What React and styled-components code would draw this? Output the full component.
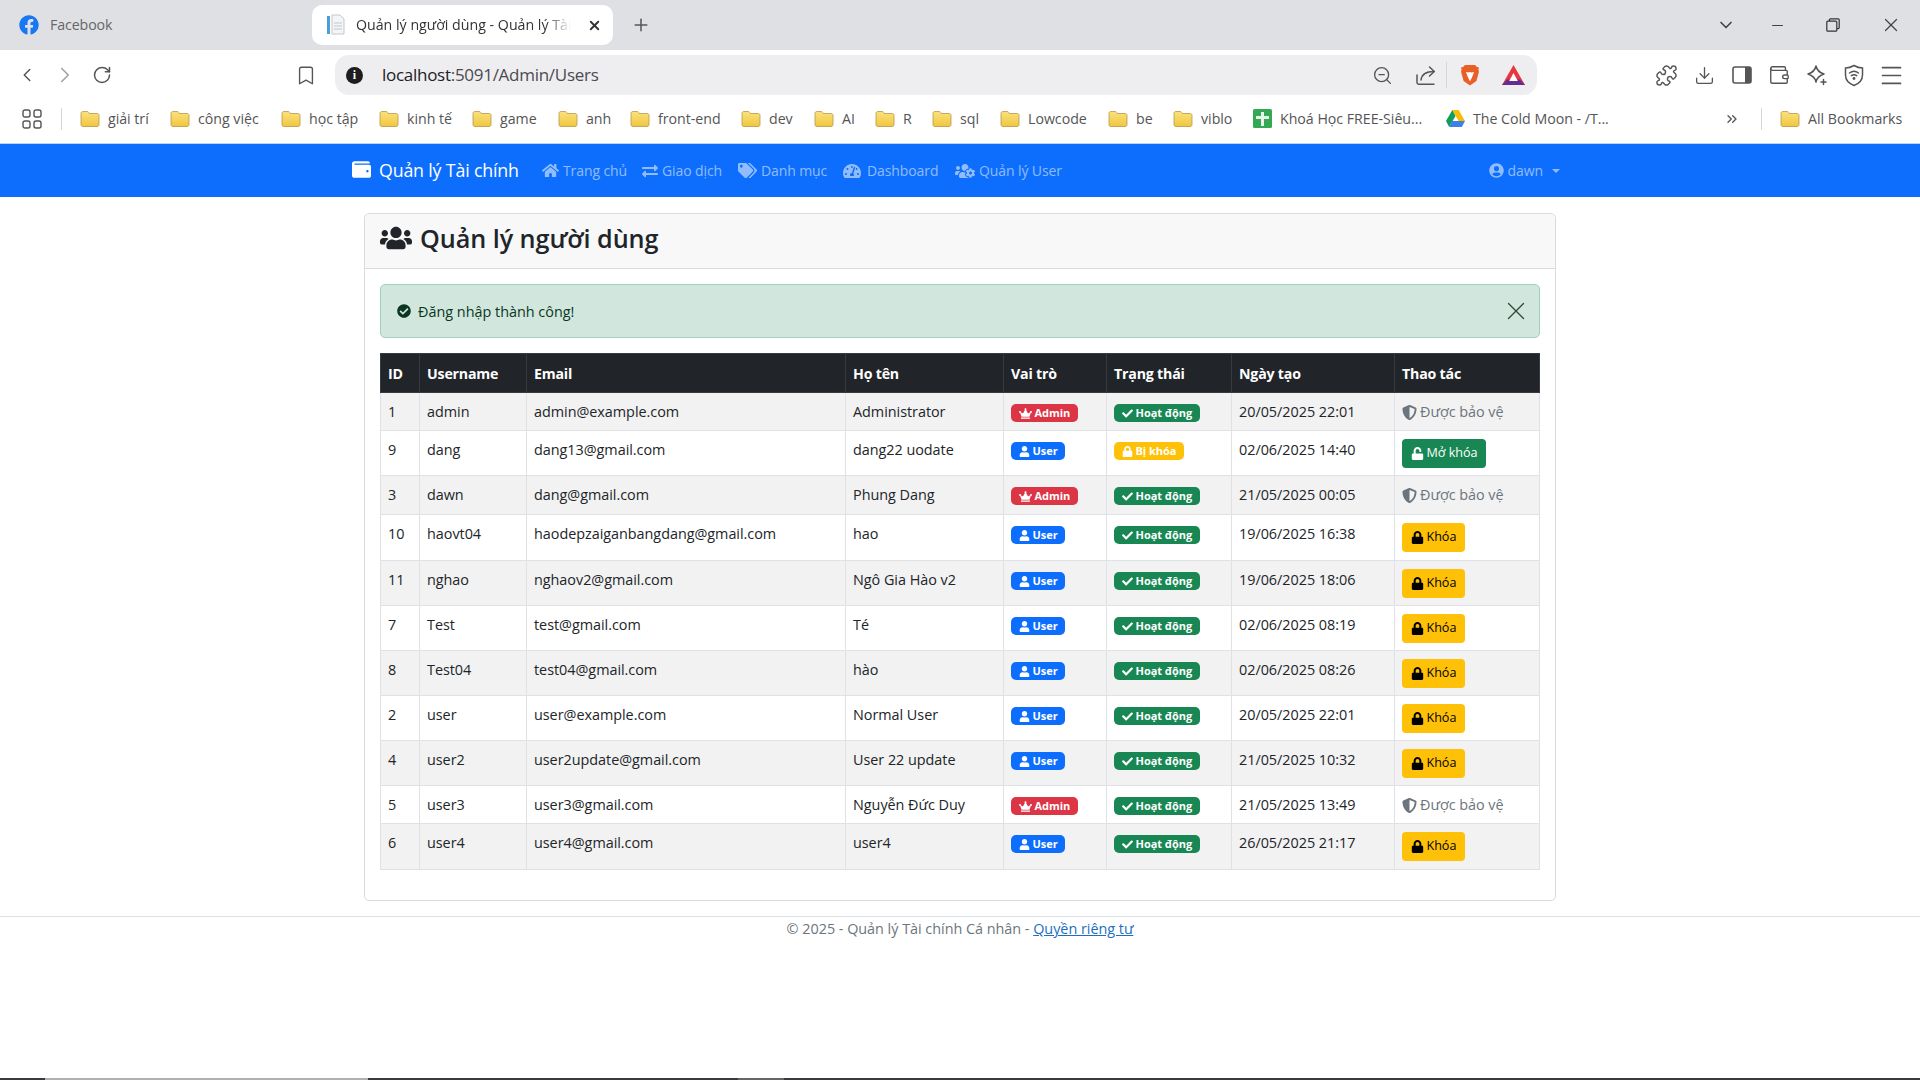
import React from 'react';
import styled, { createGlobalStyle } from 'styled-components';
import {
  FaWallet, FaHome, FaExchangeAlt, FaTags, FaTachometerAlt, FaUsersCog, FaUserCircle, FaUsers,
  FaCheckCircle, FaCrown, FaUser, FaCheck, FaLock, FaUnlock, FaShieldAlt, FaFacebook,
} from 'react-icons/fa';
import {
  ChevronLeft, ChevronRight, RotateCw, Bookmark, ZoomOut, Puzzle, Download, Wallet,
  Menu, ChevronDown, Minus, X, Plus, ChevronsRight,
} from 'lucide-react';

const Global = createGlobalStyle`
  html, body { margin: 0; padding: 0; background: #fff; }
  body { font-family: "Open Sans", "Noto Sans", sans-serif; color: #212529; overflow: hidden; }
  * { box-sizing: border-box; }
`;

const Page = styled.div`
  width: 1920px; height: 1080px; display: flex; flex-direction: column; position: relative; overflow: hidden;
`;
const TabBar = styled.div`
  height: 50px; background: #dfe0e4; display: flex; align-items: center; flex: none;
`;
const InactiveTab = styled.div`
  width: 312px; padding-left: 19px; display: flex; align-items: center; gap: 11px; color: #666;
  font-size: 14.2px; letter-spacing: -0.1px; line-height: 18px;
  svg { color: #1877f2; }
`;
const ActiveTab = styled.div`
  width: 301px; height: 40px; background: #fff; border-radius: 10px; display: flex; align-items: center;
  padding: 0 0 0 15px; font-size: 14.2px; color: #333;
`;
const TabTitle = styled.span`
  width: 215px; margin: 0 16px 2px 11px; overflow: hidden; white-space: nowrap; flex: none;
  -webkit-mask-image: linear-gradient(90deg, #000 88%, transparent);
  mask-image: linear-gradient(90deg, #000 88%, transparent);
`;
const NewTab = styled.div`
  margin-left: 18px; display: flex; color: #555;
`;
const WindowButtons = styled.div`
  margin-left: auto; display: flex; align-items: center; color: #444;
`;
const WindowButton = styled.div`
  width: ${p => p.$w}px; display: flex; justify-content: center;
`;
const Toolbar = styled.div`
  height: 50px; background: #fff; display: flex; align-items: center; flex: none; color: #555; padding-left: 16px;
`;
const NavIcon = styled.div`
  width: ${p => p.$w || 37.5}px; margin-left: ${p => p.$ml || 0}px; display: flex; justify-content: center; flex: none;
  color: ${p => p.$c || '#555'};
`;
const Omnibox = styled.div`
  width: 1202px; height: 40px; margin-left: 18px; background: #eeeef1; border-radius: 14px; flex: none;
  display: flex; align-items: center; padding: 0 12px 0 11px;
`;
const InfoDot = styled.div`
  width: 17px; height: 17px; border-radius: 50%; background: #1d1d20; color: #fff; font: 700 12px/17px "Liberation Serif", serif;
  text-align: center; flex: none;
`;
const Url = styled.div`
  margin: 0 0 2px 19px; font-size: 17px; color: #4a4a4e; letter-spacing: -0.28px; flex: 1;
  b { color: #202124; font-weight: 400; }
`;
const Separator = styled.div`
  width: 1px; height: ${p => p.$h || 26}px; background: #d5d5d8; margin-left: ${p => p.$ml || 0}px; flex: none;
`;
const Actions = styled.div`
  margin-left: 111px; display: flex; align-items: center;
`;
const BookmarksBar = styled.div`
  height: 43px; background: #fff; display: flex; align-items: center; flex: none; padding: 0 0 6px 22px;
  font-size: 14.2px; color: #555;
`;
const Bookmarks = styled.div`
  display: flex; align-items: center; gap: 21px; margin-left: 18px;
`;
const BookmarkItem = styled.div`
  display: flex; align-items: center; gap: 8px; white-space: nowrap; margin-left: ${p => p.$ml || 0}px;
`;
const BookmarkLabel = styled.span`
  display: block; width: ${p => p.$w}px; letter-spacing: -0.02px;
`;
const NavBar = styled.nav`
  height: 54px; background: #0d6efd; border-top: 1px solid #b8d4f0; flex: none;
`;
const NavInner = styled.div`
  width: 1216px; margin: 0 auto; height: 100%; display: flex; align-items: center;
`;
const Brand = styled.div`
  display: flex; align-items: center; gap: 8px; color: #fff; font-size: 17.8px; width: 190px; letter-spacing: -0.17px; line-height: 24px; padding-bottom: 2px;
`;
const NavLink = styled.div`
  display: flex; align-items: center; gap: ${p => p.$gap || 4}px; width: ${p => p.$w}px; color: rgba(255,255,255,.55);
  font-size: 14px; white-space: nowrap; letter-spacing: -0.1px;
`;
const UserMenu = styled(NavLink)`
  margin-left: auto; margin-right: 8px; width: auto;
`;
const Caret = styled.span`
  width: 0; height: 0; border: 4px solid transparent; border-top-color: rgba(255,255,255,.55); border-bottom: 0; margin-left: 5px;
`;
const Main = styled.main`
  width: 1192px; margin: 16px auto 15px; flex: none; border: 1px solid #d9dcdf; border-radius: 5px; height: 688px;
  display: flex; flex-direction: column;
`;
const CardHeader = styled.div`
  height: 55px; background: #f8f8f8; border-bottom: 1px solid #d9dcdf; border-radius: 5px 5px 0 0;
  display: flex; align-items: center; padding: 0 15px 7px; flex: none;
`;
const Title = styled.h1`
  margin: 0; font-size: 25.2px; font-weight: 600; display: flex; align-items: center; gap: 8px; letter-spacing: -0.05px;
`;
const CardBody = styled.div`
  padding: 15px 15px 0;
`;
const Alert = styled.div`
  height: 54px; background: #d1e7dd; border: 1px solid #a3cfbb; border-radius: 5px; color: #0a3622;
  display: flex; align-items: center; padding: 0 8px 0 16px; font-size: 14.4px; gap: 7px;
`;
const Close = styled.div`
  margin-left: auto; display: flex; color: #2d4a3d;
`;
const Table = styled.table`
  width: 1159px; margin-top: 15px; border-collapse: collapse; table-layout: fixed; font-size: 14.4px; letter-spacing: -0.03px;
`;
const HeadRow = styled.tr`
  height: 39px; background: #212529;
`;
const Th = styled.th`
  color: #fff; text-align: left; padding: 0 7px; border: 1px solid #373b3e; font-weight: 700; font-size: 14.2px; letter-spacing: -0.2px;
  width: ${p => p.$w}px; white-space: nowrap;
`;
const Row = styled.tr`
  background: ${p => p.$odd ? '#f2f2f2' : '#fff'};
  height: ${p => p.$h}px;
`;
const Td = styled.td`
  padding: 8px 7px 6px; border: 1px solid #dee2e6; vertical-align: top; line-height: 22.2px; white-space: nowrap;
`;
const Badge = styled.span`
  display: inline-flex; align-items: center; gap: 3px; height: 18px; padding: 0 7.5px; border-radius: 5px; margin-top: 3px; vertical-align: top;
  font-size: 11px; line-height: 18px; font-weight: 700;
  background: ${p => p.$bg}; color: #fff;
`;
const ActionButton = styled.span`
  display: inline-flex; align-items: center; gap: 3px; height: 29px; padding: 0 8.5px; border-radius: 4px; vertical-align: top;
  font-size: 12.6px; background: ${p => p.$bg}; color: ${p => p.$fg};
`;
const Protected = styled.span`
  color: #6c757d; display: inline-flex; align-items: center; gap: 3px; vertical-align: top;
`;
const Footer = styled.footer`
  border-top: 1px solid #dee2e6; flex: none; text-align: center; font-size: 14.4px; color: #6c757d; line-height: 24px; letter-spacing: -0.02px;
  a { color: #1b6ec2; }
`;
const TaskStrip = styled.div`
  position: absolute; left: 0; right: 0; bottom: 0; height: 2px; display: flex;
`;
const StripPart = styled.div`
  width: ${p => p.$w}px; background: ${p => p.$c}; flex: ${p => p.$w ? 'none' : 1};
`;

const Folder = () => (
  <svg width="20" height="18" viewBox="0 0 20 18">
    <defs>
      <linearGradient id="folderFill" x1="0" y1="0" x2="0" y2="1">
        <stop offset="0" stopColor="#f9e27e" />
        <stop offset="1" stopColor="#f1c63f" />
      </linearGradient>
    </defs>
    <path d="M1 3.5C1 2.4 1.7 1.5 2.8 1.5h4.4c.7 0 1.1.3 1.5 1l.5 1h8c1 0 1.8.8 1.8 1.8v9.4c0 1-.8 1.8-1.8 1.8H2.8c-1 0-1.8-.8-1.8-1.8z" fill="url(#folderFill)" stroke="#b9974a" strokeWidth=".8"/>
  </svg>
);
const Sheets = () => (
  <svg width="19" height="19" viewBox="0 0 19 19">
    <rect width="19" height="19" rx="1.5" fill="#34a853"/>
    <path d="M8 3h3v4h5v3h-5v7H8v-7H3V7h5z" fill="#e8f5e9"/>
  </svg>
);
const Drive = () => (
  <svg width="19" height="17" viewBox="0 0 19 17">
    <path d="M6.3 0h6.4L19 11h-6.4z" fill="#f9bc04"/>
    <path d="M6.3 0L0 11l3.2 6 6.3-11z" fill="#129d5b"/>
    <path d="M6.3 11H19l-3.2 6H3.2z" fill="#3f7fe9"/>
  </svg>
);
const Brave = () => (
  <svg width="20" height="22" viewBox="0 0 20 22">
    <path d="M5 1h10l2 2 2 .5-.6 2.2.6 2-2.6 9.3L10 21.5l-6.4-4.5L1 7.7l.6-2L1 3.5 3 3z" fill="#e95f26"/>
    <path d="M6 8l2.6.6L10 8l1.4.6L14 8l-1.6 4.5-2.4 5-2.4-5z" fill="#fff"/>
  </svg>
);
const Bat = () => (
  <svg width="23" height="21" viewBox="0 0 23 21">
    <path d="M11.5 0L23 20H0z" fill="#e6363f"/>
    <path d="M0 20L5 14.5h13L23 20z" fill="#662d91"/>
    <path d="M11.5 8L15.8 16H7.2z" fill="#fff"/>
  </svg>
);
const DocFavicon = () => (
  <svg width="18" height="22" viewBox="0 0 18 22">
    <rect x="0" y="2" width="3" height="18" fill="#4a9fd8"/>
    <path d="M5 1h8l4 4v15H5z" fill="#f4f5f6" stroke="#c3c7cc"/>
    <path d="M7 9h8M7 12h8M7 15h8" stroke="#c3c7cc"/>
  </svg>
);
const Apps = () => (
  <svg width="20" height="20" viewBox="0 0 20 20" fill="none" stroke="#555" strokeWidth="1.4">
    <rect x="1" y="1" width="7" height="7" rx="2"/><rect x="12" y="1" width="7" height="7" rx="2"/>
    <rect x="1" y="12" width="7" height="7" rx="2"/><rect x="12" y="12" width="7" height="7" rx="2"/>
  </svg>
);
const SidePanel = () => (
  <svg width="20" height="18" viewBox="0 0 20 18">
    <rect x="1" y="1" width="18" height="16" rx="2" fill="none" stroke="#555" strokeWidth="1.6"/>
    <rect x="13" y="1" width="6" height="16" fill="#555"/>
  </svg>
);
const Restore = () => (
  <svg width="14" height="14" viewBox="0 0 14 14" fill="none" stroke="#333" strokeWidth="1.2">
    <rect x=".8" y="3.2" width="10" height="10" rx="1"/>
    <path d="M3.4 3V1.8c0-.6.4-1 1-1h7.8c.6 0 1 .4 1 1v7.8c0 .6-.4 1-1 1H11"/>
  </svg>
);
const ShareOut = () => (
  <svg width="21" height="21" viewBox="0 0 21 21" fill="none" stroke="#555" strokeWidth="1.5" strokeLinecap="round" strokeLinejoin="round">
    <path d="M2 10v7.5c0 1 .7 1.7 1.7 1.7H19"/>
    <path d="M6 15c.6-5 5-8.500 13-8.500"/>
    <path d="M14.500 2l4.800 4.500-4.800 4.500"/>
  </svg>
);
const SparkleStar = () => (
  <svg width="22" height="22" viewBox="0 0 22 22" fill="none" stroke="#555" strokeWidth="1.5" strokeLinejoin="round" strokeLinecap="round">
    <path d="M10 2c.8 4 3 6.400 8 8-5 1.600-7.200 4-8 8-.8-4-3-6.400-8-8 5-1.600 7.200-4 8-8z"/>
    <path d="M17.500 15.500v5M15 18h5"/>
  </svg>
);
const WifiShield = () => (
  <svg width="20" height="23" viewBox="0 0 20 23" fill="none" stroke="#555" strokeWidth="1.5" strokeLinecap="round">
    <path d="M10 1.500c3 1.800 5.600 2.500 8.500 2.500v7c0 5-3.300 8.500-8.500 10.500C4.800 19.500 1.500 16 1.500 11V4c2.900 0 5.500-.7 8.500-2.500z"/>
    <path d="M5.500 9c2.700-2 6.300-2 9 0M7.300 11.700c1.600-1.100 3.800-1.100 5.400 0"/>
    <circle cx="10" cy="14.500" r=".7" fill="#555"/>
  </svg>
);

const bookmarks = [
  ['giải trí', 41], ['công việc', 62], ['học tập', 49], ['kinh tế', 44], ['game', 37], ['anh', 23],
  ['front-end', 62], ['dev', 24], ['AI', 12], ['R', 8], ['sql', 19], ['Lowcode', 59], ['be', 16], ['viblo', 31],
];

const STRIP = [[45, '#3a3a3c'], [323, '#b0b0b0'], [370, '#3a3a3c'], [46, '#666'], [0, '#3a3a3c']];

const ROWS = [
  [1, 'admin', 'admin@example.com', 'Administrator', 'a', 1, '20/05/2025 22:01', 38],
  [9, 'dang', 'dang13@gmail.com', 'dang22 uodate', 'u', 0, '02/06/2025 14:40', 45],
  [3, 'dawn', 'dang@gmail.com', 'Phung Dang', 'a', 1, '21/05/2025 00:05', 39],
  [10, 'haovt04', 'haodepzaiganbangdang@gmail.com', 'hao', 'u', 1, '19/06/2025 16:38', 46],
  [11, 'nghao', 'nghaov2@gmail.com', 'Ngô Gia Hào v2', 'u', 1, '19/06/2025 18:06', 45],
  [7, 'Test', 'test@gmail.com', 'Té', 'u', 1, '02/06/2025 08:19', 45],
  [8, 'Test04', 'test04@gmail.com', 'hào', 'u', 1, '02/06/2025 08:26', 45],
  [2, 'user', 'user@example.com', 'Normal User', 'u', 1, '20/05/2025 22:01', 45],
  [4, 'user2', 'user2update@gmail.com', 'User 22 update', 'u', 1, '21/05/2025 10:32', 45],
  [5, 'user3', 'user3@gmail.com', 'Nguyễn Đức Duy', 'a', 1, '21/05/2025 13:49', 38],
  [6, 'user4', 'user4@gmail.com', 'user4', 'u', 1, '26/05/2025 21:17', 46],
];

const HEAD = [['ID', 39], ['Username', 107], ['Email', 319], ['Họ tên', 158], ['Vai trò', 103], ['Trạng thái', 125], ['Ngày tạo', 163], ['Thao tác', 145]];

function UserRow({ r, i }) {
  const [id, name, mail, full, role, active, date, h] = r;
  const admin = role === 'a';
  return (
    <Row $odd={i % 2 === 0} $h={h}>
      <Td>{id}</Td>
      <Td>{name}</Td>
      <Td>{mail}</Td>
      <Td>{full}</Td>
      <Td>
        {admin
          ? <Badge $bg="#dc3545"><FaCrown size={13} /> Admin</Badge>
          : <Badge $bg="#0d6efd"><FaUser size={11} /> User</Badge>}
      </Td>
      <Td>
        {active
          ? <Badge $bg="#198754"><FaCheck size={11} /> Hoạt động</Badge>
          : <Badge $bg="#ffc107"><FaLock size={11} /> Bị khóa</Badge>}
      </Td>
      <Td>{date}</Td>
      <Td>
        {admin
          ? <Protected><FaShieldAlt size={15} /> Được bảo vệ</Protected>
          : active
            ? <ActionButton $bg="#ffc107" $fg="#000"><FaLock size={13} /> Khóa</ActionButton>
            : <ActionButton $bg="#198754" $fg="#fff"><FaUnlock size={13} /> Mở khóa</ActionButton>}
      </Td>
    </Row>
  );
}

export default function App() {
  return (
    <Page>
      <Global />
      <TabBar>
        <InactiveTab><FaFacebook size={20} /> Facebook</InactiveTab>
        <ActiveTab>
          <DocFavicon />
          <TabTitle>Quản lý người dùng - Quản lý Tài chính</TabTitle>
          <X size={15} strokeWidth={3} color="#333" />
        </ActiveTab>
        <NewTab><Plus size={20} strokeWidth={1.8} /></NewTab>
        <WindowButtons>
          <WindowButton $w={48}><ChevronDown size={20} /></WindowButton>
          <WindowButton $w={54}><Minus size={17} strokeWidth={1.5} /></WindowButton>
          <WindowButton $w={58}><Restore /></WindowButton>
          <WindowButton $w={58}><X size={22} strokeWidth={1.3} /></WindowButton>
        </WindowButtons>
      </TabBar>
      <Toolbar>
        <NavIcon $w={22}><ChevronLeft size={26} strokeWidth={1.6} /></NavIcon>
        <NavIcon $w={54} $c="#a5a5a5"><ChevronRight size={26} strokeWidth={1.6} /></NavIcon>
        <NavIcon $w={20}><RotateCw size={22} strokeWidth={1.8} /></NavIcon>
        <NavIcon $w={22} $ml={183}><Bookmark size={25} strokeWidth={1.5} /></NavIcon>
        <Omnibox>
          <InfoDot>i</InfoDot>
          <Url><b>localhost</b>:5091/Admin/Users</Url>
          <NavIcon $w={24}><ZoomOut size={21} strokeWidth={1.5} /></NavIcon>
          <NavIcon $w={42} $ml={10}><ShareOut /></NavIcon>
          <Separator />
          <NavIcon $w={24} $ml={11}><Brave /></NavIcon>
          <NavIcon $w={24} $ml={19}><Bat /></NavIcon>
        </Omnibox>
        <Actions>
          <NavIcon><Puzzle size={23} strokeWidth={1.5} /></NavIcon>
          <NavIcon><Download size={21} strokeWidth={1.5} /></NavIcon>
          <NavIcon><SidePanel /></NavIcon>
          <NavIcon><Wallet size={22} strokeWidth={1.5} /></NavIcon>
          <NavIcon><SparkleStar /></NavIcon>
          <NavIcon><WifiShield /></NavIcon>
          <NavIcon><Menu size={27} strokeWidth={1.5} /></NavIcon>
        </Actions>
      </Toolbar>
      <BookmarksBar>
        <Apps />
        <Separator $ml={19} $h={22} />
        <Bookmarks>
          {bookmarks.map(([t, w]) => (
            <BookmarkItem key={t}><Folder /><BookmarkLabel $w={w}>{t}</BookmarkLabel></BookmarkItem>
          ))}
          <BookmarkItem><Sheets /><BookmarkLabel $w={145}>Khoá Học FREE-Siêu...</BookmarkLabel></BookmarkItem>
          <BookmarkItem><Drive /><BookmarkLabel $w={141}>The Cold Moon - /T...</BookmarkLabel></BookmarkItem>
        </Bookmarks>
        <NavIcon $w={24} $ml={106}><ChevronsRight size={16} /></NavIcon>
        <Separator $ml={17} $h={22} />
        <BookmarkItem $ml={18}><Folder /><BookmarkLabel $w={94}>All Bookmarks</BookmarkLabel></BookmarkItem>
      </BookmarksBar>
      <NavBar>
        <NavInner>
          <Brand><FaWallet size={19} /> Quản lý Tài chính</Brand>
          <NavLink $w={100}><FaHome size={17} /> Trang chủ</NavLink>
          <NavLink $w={96}><FaExchangeAlt size={16} /> Giao dịch</NavLink>
          <NavLink $w={105}><FaTags size={19} /> Danh mục</NavLink>
          <NavLink $w={112} $gap={6}><FaTachometerAlt size={18} /> Dashboard</NavLink>
          <NavLink $w={110}><FaUsersCog size={20} /> Quản lý User</NavLink>
          <UserMenu><FaUserCircle size={15} /> dawn <Caret /></UserMenu>
        </NavInner>
      </NavBar>
      <Main>
        <CardHeader>
          <Title><FaUsers size={32} /> Quản lý người dùng</Title>
        </CardHeader>
        <CardBody>
          <Alert>
            <FaCheckCircle size={14} /> Đăng nhập thành công!
            <Close><X size={30} strokeWidth={1.1} /></Close>
          </Alert>
          <Table>
            <thead>
              <HeadRow>{HEAD.map(([t, w]) => <Th key={t} $w={w}>{t}</Th>)}</HeadRow>
            </thead>
            <tbody>
              {ROWS.map((r, i) => <UserRow key={r[0]} r={r} i={i} />)}
            </tbody>
          </Table>
        </CardBody>
      </Main>
      <Footer>© 2025 - Quản lý Tài chính Cá nhân - <a href="#privacy">Quyền riêng tư</a></Footer>
      <TaskStrip>
        {STRIP.map(([w, c], i) => <StripPart key={i} $w={w} $c={c} />)}
      </TaskStrip>
    </Page>
  );
}
